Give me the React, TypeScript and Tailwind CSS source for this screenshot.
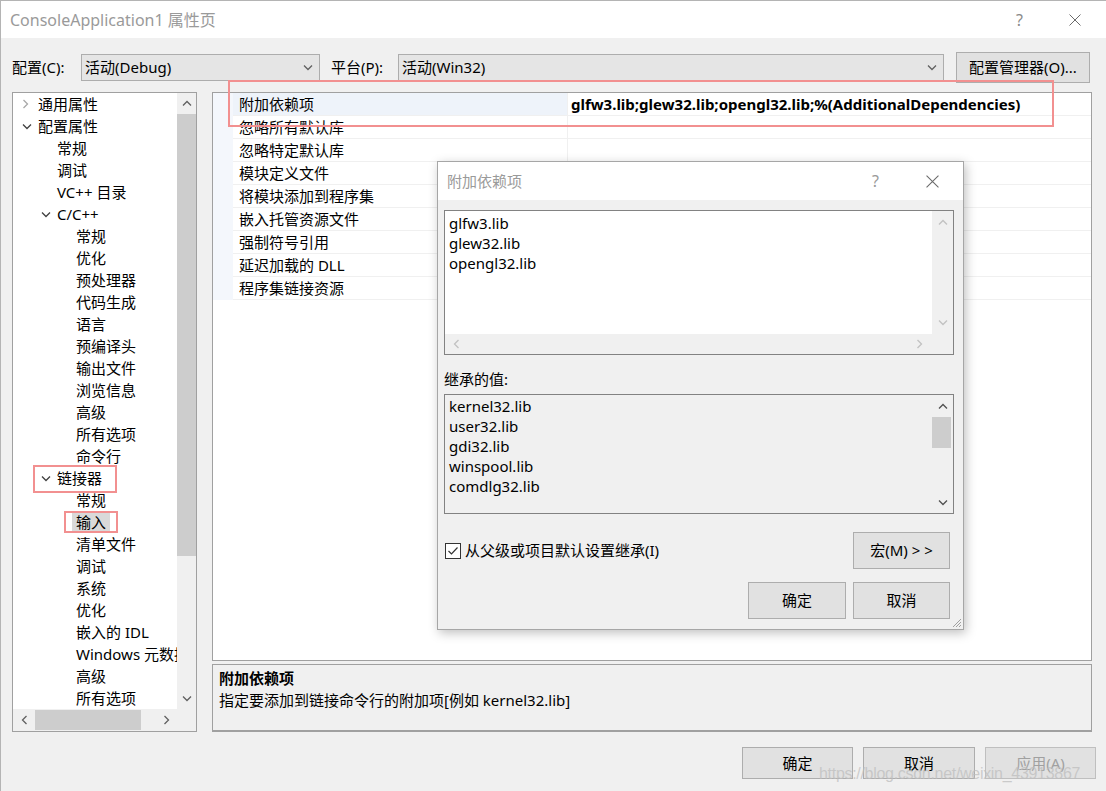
import React from 'react';

type Node = { t: string; l: 0 | 1 | 2; c?: 'r' | 'd'; sel?: boolean };

const tree: Node[] = [
  { t: '通用属性', l: 0, c: 'r' },
  { t: '配置属性', l: 0, c: 'd' },
  { t: '常规', l: 1 },
  { t: '调试', l: 1 },
  { t: 'VC++ 目录', l: 1 },
  { t: 'C/C++', l: 1, c: 'd' },
  { t: '常规', l: 2 },
  { t: '优化', l: 2 },
  { t: '预处理器', l: 2 },
  { t: '代码生成', l: 2 },
  { t: '语言', l: 2 },
  { t: '预编译头', l: 2 },
  { t: '输出文件', l: 2 },
  { t: '浏览信息', l: 2 },
  { t: '高级', l: 2 },
  { t: '所有选项', l: 2 },
  { t: '命令行', l: 2 },
  { t: '链接器', l: 1, c: 'd' },
  { t: '常规', l: 2 },
  { t: '输入', l: 2, sel: true },
  { t: '清单文件', l: 2 },
  { t: '调试', l: 2 },
  { t: '系统', l: 2 },
  { t: '优化', l: 2 },
  { t: '嵌入的 IDL', l: 2 },
  { t: 'Windows 元数据', l: 2 },
  { t: '高级', l: 2 },
  { t: '所有选项', l: 2 },
];

const indent = ['pl-[9px]', 'pl-[28px]', 'pl-[47px]'];

const props = [
  '附加依赖项',
  '忽略所有默认库',
  '忽略特定默认库',
  '模块定义文件',
  '将模块添加到程序集',
  '嵌入托管资源文件',
  '强制符号引用',
  '延迟加载的 DLL',
  '程序集链接资源',
];

const inherited = ['kernel32.lib', 'user32.lib', 'gdi32.lib', 'winspool.lib', 'comdlg32.lib'];

function Chev({ dir, color }: { dir: 'up' | 'down' | 'left' | 'right'; color: string }) {
  const vertical = dir === 'up' || dir === 'down';
  const pts = {
    up: '1,5.5 5,1.5 9,5.5',
    down: '1,1.5 5,5.5 9,1.5',
    left: '5.5,1 1.5,5 5.5,9',
    right: '1.5,1 5.5,5 1.5,9',
  }[dir];
  return (
    <svg width={vertical ? 10 : 7} height={vertical ? 7 : 10} viewBox={vertical ? '0 0 10 7' : '0 0 7 10'}>
      <polyline points={pts} fill="none" stroke={color} strokeWidth="1.3" />
    </svg>
  );
}

function CloseX({ size }: { size: number }) {
  return (
    <svg width={size} height={size} viewBox="0 0 12 12">
      <path d="M0.5 0.5 L11.5 11.5 M11.5 0.5 L0.5 11.5" stroke="#6b6b6b" strokeWidth="1" fill="none" />
    </svg>
  );
}

function Select({ text, w }: { text: string; w: string }) {
  return (
    <div className={`${w} flex h-[27px] items-center justify-between border border-[#adadad] bg-[#e5e5e5] pl-[3px] pr-[6px]`}>
      <span>{text}</span>
      <Chev dir="down" color="#606060" />
    </div>
  );
}

export default function App() {
  return (
    <div className="relative h-[791px] w-[1106px] overflow-hidden border-l border-t border-[#b4b4b4] bg-[#f0f0f0] font-['Segoe_UI','Noto_Sans','Noto_Sans_CJK_SC',sans-serif] text-[15px] text-black">
      {/* title bar */}
      <div className="flex h-[37px] items-center bg-white pl-[9px] pr-[25px]">
        <span className="text-[16px] text-[#9a9a9a]">ConsoleApplication1 属性页</span>
        <div className="ml-auto flex items-center gap-[46px]">
          <span className="text-[16px] text-[#8a8a8a]">?</span>
          <CloseX size={12} />
        </div>
      </div>

      <div className="pl-[11px]">
        {/* config row */}
        <div className="mt-[13px] flex h-[32px] items-center">
          <span className="w-[69px]">配置(C):</span>
          <Select text="活动(Debug)" w="w-[239px]" />
          <span className="ml-[11px] w-[67px]">平台(P):</span>
          <Select text="活动(Win32)" w="w-[546px]" />
          <button className="ml-[12px] h-[31px] w-[134px] border border-[#adadad] bg-[#e1e1e1]">配置管理器(O)...</button>
        </div>

        {/* main */}
        <div className="mt-[9px] flex gap-[15px]">
          {/* tree */}
          <div className="flex h-[640px] w-[185px] flex-col border border-[#a0a0a0] bg-white">
            <div className="flex h-[616px]">
              <div className="min-w-0 flex-1 overflow-hidden whitespace-nowrap">
                {tree.map((n, i) => (
                  <div key={i} className={`flex h-[22px] items-center ${indent[n.l]}`}>
                    <span className="flex w-[16px] shrink-0 items-center">
                      {n.c === 'r' && <Chev dir="right" color="#a8a8a8" />}
                      {n.c === 'd' && <Chev dir="down" color="#404040" />}
                    </span>
                    {n.sel ? (
                      <span className="-ml-[4px] flex h-[19px] shrink-0 items-center bg-[#d9d9d9] px-[4px]">{n.t}</span>
                    ) : (
                      <span className="shrink-0">{n.t}</span>
                    )}
                  </div>
                ))}
              </div>
              <div className="flex w-[19px] shrink-0 flex-col bg-[#f0f0f0]">
                <div className="flex h-[21px] items-center justify-center">
                  <Chev dir="up" color="#606060" />
                </div>
                <div className="h-[442px] bg-[#cdcdcd]" />
                <div className="flex-1" />
                <div className="flex h-[22px] items-center justify-center">
                  <Chev dir="down" color="#606060" />
                </div>
              </div>
            </div>
            <div className="flex h-[22px] bg-[#f0f0f0]">
              <div className="flex w-[22px] items-center justify-center">
                <Chev dir="left" color="#606060" />
              </div>
              <div className="my-[1px] w-[106px] bg-[#cdcdcd]" />
              <div className="flex-1" />
              <div className="flex w-[22px] items-center justify-center">
                <Chev dir="right" color="#606060" />
              </div>
              <div className="w-[19px]" />
            </div>
          </div>

          {/* right column */}
          <div className="w-[880px]">
            <div className="h-[569px] border border-[#a0a0a0] bg-white">
              {props.map((p, i) => (
                <div key={i} className="flex h-[23px]">
                  <div className="w-[20px] bg-[#f4f7fc]" />
                  <div
                    className={`flex w-[334px] items-center border-b border-[#f0f0f0] pl-[6px] ${i === 0 ? 'bg-[#eef3fa]' : ''}`}
                  >
                    {p}
                  </div>
                  <div className="flex flex-1 items-center border-b border-l border-[#f0f0f0] pl-[3px] font-bold">
                    {i === 0 ? 'glfw3.lib;glew32.lib;opengl32.lib;%(AdditionalDependencies)' : ''}
                  </div>
                </div>
              ))}
            </div>
            <div className="mt-[3px] h-[68px] border border-b-2 border-[#a0a0a0] pl-[6px] pt-[2px] leading-[22px]">
              <div className="font-bold">附加依赖项</div>
              <div>指定要添加到链接命令行的附加项[例如 kernel32.lib]</div>
            </div>
          </div>
        </div>

        {/* bottom buttons */}
        <div className="mt-[15px] flex justify-end gap-[10px] pr-[10px]">
          <button className="h-[32px] w-[111px] border border-[#adadad] bg-[#e1e1e1]">确定</button>
          <button className="h-[32px] w-[112px] border border-[#adadad] bg-[#e1e1e1]">取消</button>
          <button className="h-[32px] w-[111px] border border-[#bfbfbf] bg-[#e1e1e1] text-[#a0a0a0]">应用(A)</button>
        </div>
      </div>

      {/* annotation boxes */}
      <div className="absolute left-[227px] top-[79px] h-[47px] w-[826px] border-2 border-[#f29090]" />
      <div className="absolute left-[32px] top-[464px] h-[28px] w-[84px] border-2 border-[#f29090]" />
      <div className="absolute left-[63px] top-[510px] h-[22px] w-[54px] border-2 border-[#f29090]" />

      {/* dialog */}
      <div className="absolute left-[436px] top-[160px] flex h-[469px] w-[527px] flex-col border border-[#a6a6a6] bg-[#f0f0f0] shadow-[2px_3px_10px_rgba(0,0,0,0.25)]">
        <div className="flex h-[38px] items-center bg-white pl-[9px] pr-[24px]">
          <span className="text-[15px] text-[#9a9a9a]">附加依赖项</span>
          <div className="ml-auto flex items-center gap-[47px]">
            <span className="text-[16px] text-[#9a9a9a]">?</span>
            <CloseX size={13} />
          </div>
        </div>
        <div className="flex flex-col pl-[6px] pt-[10px]">
          {/* edit 1 */}
          <div className="flex h-[145px] w-[510px] flex-col border border-[#828282] bg-[#f0f0f0]">
            <div className="flex h-[123px]">
              <div className="flex-1 bg-white pl-[4px] pt-[2px] leading-[20px]">
                <div>glfw3.lib</div>
                <div>glew32.lib</div>
                <div>opengl32.lib</div>
              </div>
              <div className="flex w-[21px] flex-col justify-between py-[8px]">
                <div className="flex justify-center">
                  <Chev dir="up" color="#c2c2c2" />
                </div>
                <div className="flex justify-center">
                  <Chev dir="down" color="#c2c2c2" />
                </div>
              </div>
            </div>
            <div className="flex h-[20px] items-center justify-between pl-[8px] pr-[30px]">
              <Chev dir="left" color="#c2c2c2" />
              <Chev dir="right" color="#c2c2c2" />
            </div>
          </div>

          <div className="mt-[12px] flex h-[24px] items-center">继承的值:</div>

          {/* edit 2 */}
          <div className="mt-[3px] flex h-[120px] w-[510px] border border-[#828282] bg-[#f0f0f0]">
            <div className="flex-1 pl-[4px] pt-[1px] leading-[20px]">
              {inherited.map((s) => (
                <div key={s}>{s}</div>
              ))}
            </div>
            <div className="flex w-[21px] flex-col">
              <div className="flex h-[22px] items-center justify-center">
                <Chev dir="up" color="#505050" />
              </div>
              <div className="mr-[2px] h-[31px] bg-[#cdcdcd]" />
              <div className="flex-1" />
              <div className="flex h-[22px] items-center justify-center">
                <Chev dir="down" color="#505050" />
              </div>
            </div>
          </div>

          <div className="mt-[18px] flex h-[37px] w-[510px] items-center justify-between pr-[4px]">
            <div className="flex items-center">
              <div className="ml-[1px] flex h-[16px] w-[16px] items-center justify-center border border-[#333333] bg-white">
                <svg width="12" height="12" viewBox="0 0 12 12">
                  <polyline points="1.5,6 4.5,9 10.5,2.5" fill="none" stroke="#333333" strokeWidth="1.2" />
                </svg>
              </div>
              <span className="ml-[4px]">从父级或项目默认设置继承(I)</span>
            </div>
            <button className="h-[37px] w-[97px] border border-[#adadad] bg-[#e1e1e1]">宏(M) &gt; &gt;</button>
          </div>

          <div className="mt-[13px] flex h-[37px] w-[510px] justify-end gap-[7px] pr-[4px]">
            <button className="h-[37px] w-[98px] border border-[#adadad] bg-[#e1e1e1]">确定</button>
            <button className="h-[37px] w-[97px] border border-[#adadad] bg-[#e1e1e1]">取消</button>
          </div>
        </div>
        <svg className="absolute bottom-[1px] right-[1px]" width="12" height="12" viewBox="0 0 12 12">
          <path d="M11 3 L3 11 M11 6 L6 11 M11 9 L9 11" stroke="#a0a0a0" strokeWidth="1" fill="none" />
        </svg>
      </div>

      {/* watermark */}
      <div className="absolute left-[818px] top-[761px] font-['Liberation_Sans',sans-serif] text-[16px] tracking-[-0.3px] text-[rgba(190,190,190,0.75)]">
        https://blog.csdn.net/weixin_43913867
      </div>
    </div>
  );
}
